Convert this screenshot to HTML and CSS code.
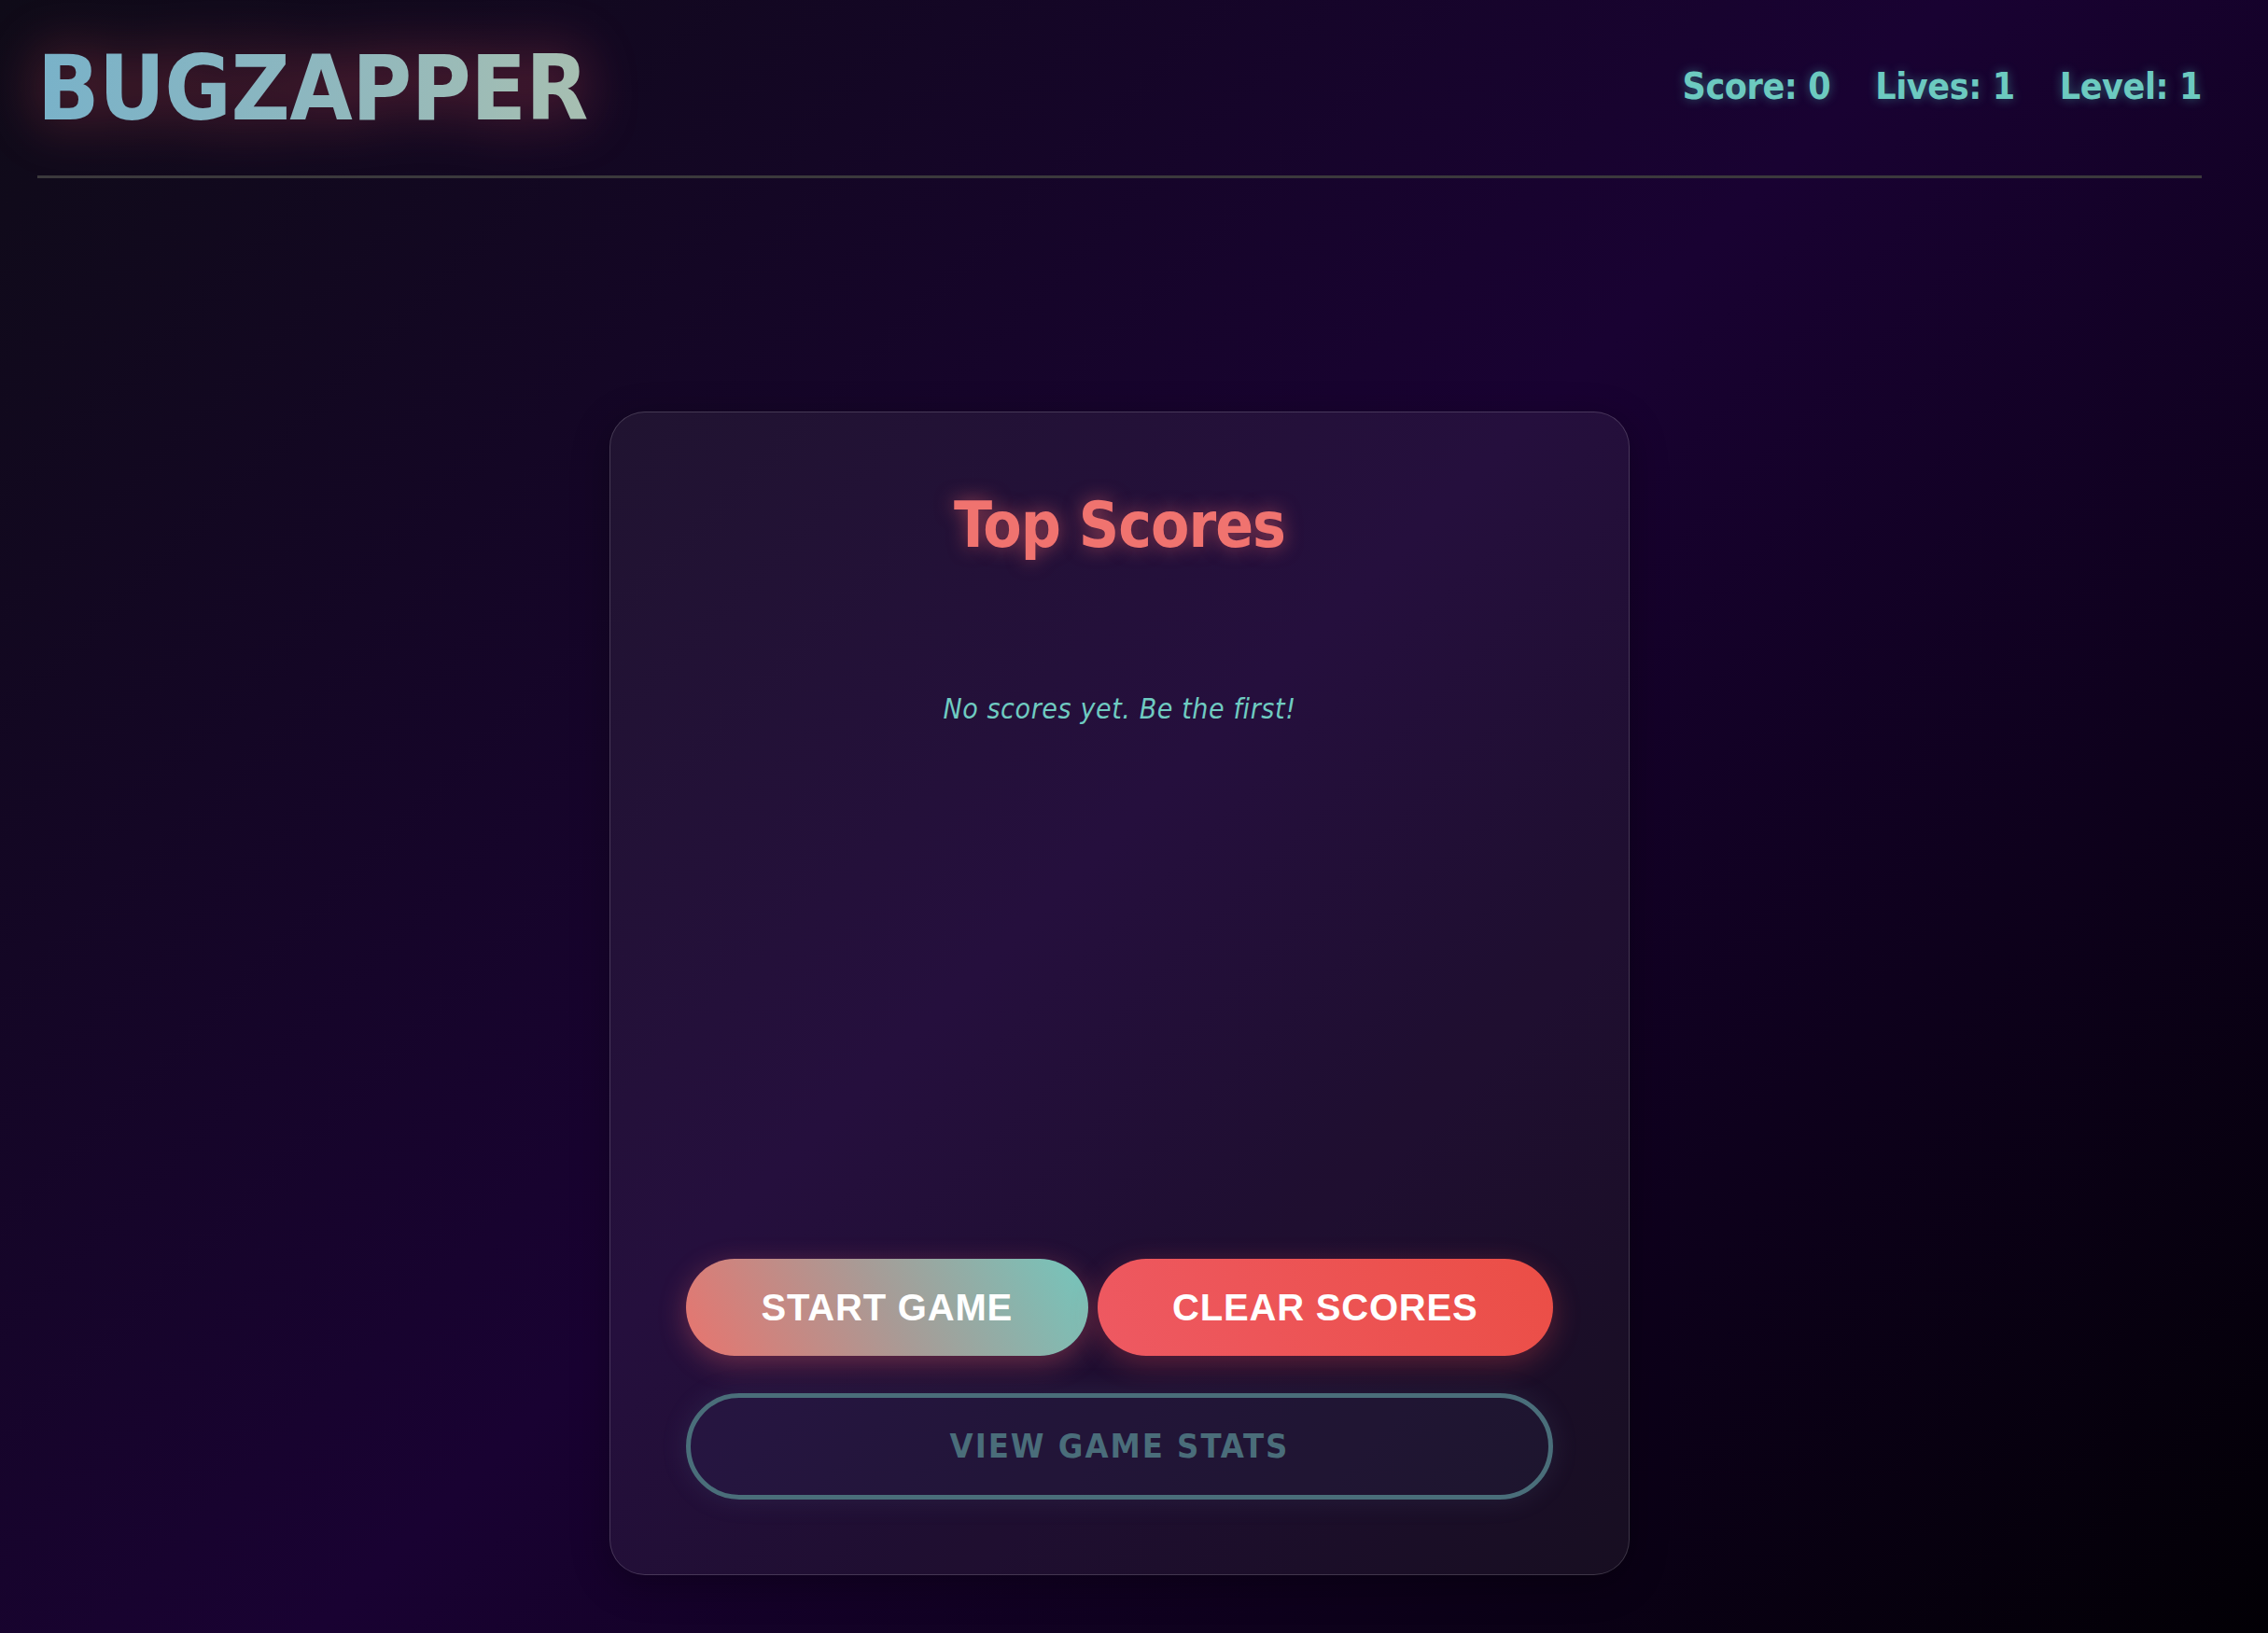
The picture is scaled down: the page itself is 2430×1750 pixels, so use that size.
FILE: index.html
```html
<!DOCTYPE html>
<html lang="en">
<head>
<meta charset="utf-8">
<title>BugZapper</title>
<link rel="stylesheet" href="styles.css">
</head>
<body>
<div class="page">
  <header class="header">
    <h1 class="logo">BUGZAPPER</h1>
    <div class="stats">
      <span class="stat">Score: 0</span>
      <span class="stat">Lives: 1</span>
      <span class="stat">Level: 1</span>
    </div>
  </header>
  <main class="main">
    <section class="card">
      <h2 class="card-title">Top Scores</h2>
      <div class="scores">
        <p class="empty">No scores yet. Be the first!</p>
      </div>
      <div class="btn-row">
        <button class="btn btn-start">START GAME</button>
        <button class="btn btn-clear">CLEAR SCORES</button>
      </div>
      <button class="btn-stats">VIEW GAME STATS</button>
    </section>
  </main>
</div>
</body>
</html>
```

FILE: styles.css
```css
html, body {
  margin: 0;
  padding: 0;
}
body {
  width: 2430px;
  height: 1750px;
  overflow: hidden;
  background: linear-gradient(135deg, #0f0b18 0%, #190232 50%, #020005 100%);
  font-family: "DejaVu Sans Condensed", "DejaVu Sans", sans-serif;
  font-stretch: condensed;
}
.page {
  width: 2319px;
  margin-left: 40px;
}
.header {
  display: flex;
  justify-content: space-between;
  align-items: center;
  padding: 46px 0 45px;
  border-bottom: 3px solid #3b393c;
}
.logo {
  margin: 0;
  font-size: 97px;
  line-height: 1;
  font-weight: bold;
  letter-spacing: -0.5px;
  background: linear-gradient(90deg, #79b2c9 0%, #8db7bf 50%, #a7bfb1 100%);
  -webkit-background-clip: text;
  background-clip: text;
  color: transparent;
  filter: drop-shadow(0 0 30px rgba(255, 90, 100, 0.4));
}
.stats {
  display: flex;
  gap: 48px;
  margin-bottom: 5px;
}
.stat {
  font-size: 39px;
  line-height: 1;
  font-weight: bold;
  letter-spacing: -0.4px;
  color: #6ccac0;
  text-shadow: 0 0 12px rgba(78, 205, 196, 0.45);
}
.main {
  display: flex;
  justify-content: center;
  padding-top: 250px;
}
.card {
  width: 1093px;
  box-sizing: border-box;
  padding: 88px 81px 80px;
  border: 1px solid rgba(255, 255, 255, 0.17);
  border-radius: 38px;
  background: rgba(255, 255, 255, 0.055);
  box-shadow: 0 10px 40px rgba(0, 0, 0, 0.3);
  display: flex;
  flex-direction: column;
}
.card-title {
  margin: 0;
  text-align: center;
  font-size: 67px;
  line-height: 1;
  font-weight: bold;
  letter-spacing: -1px;
  color: #f0736f;
  text-shadow: 0 0 20px rgba(255, 107, 107, 0.5);
}
.scores {
  height: 752px;
  box-sizing: border-box;
  padding-top: 148px;
}
.empty {
  margin: 0;
  text-align: center;
  font-size: 30px;
  line-height: 1;
  font-style: italic;
  letter-spacing: 0.6px;
  color: #6fcbc1;
}
.btn-row {
  display: flex;
  gap: 10px;
}
.btn {
  flex: 1 1 auto;
  border: none;
  border-radius: 60px;
  padding: 32px 60px;
  font-family: "Liberation Sans", Arial, sans-serif;
  font-stretch: normal;
  font-size: 40px;
  line-height: 1;
  font-weight: bold;
  letter-spacing: 0.8px;
  color: #ffffff;
}
.btn-start {
  background: linear-gradient(60deg, #e8746e 0%, #a89b96 50%, #74c6bc 100%);
  box-shadow: 0 8px 30px rgba(255, 107, 107, 0.32);
}
.btn-clear {
  background: linear-gradient(60deg, #ee5962 0%, #eb4e46 100%);
  box-shadow: 0 8px 30px rgba(255, 80, 80, 0.28);
}
.btn-stats {
  margin-top: 40px;
  border: 5px solid #4a6e7a;
  border-radius: 60px;
  padding: 32px 20px;
  background: rgba(90, 120, 170, 0.07);
  box-shadow: 0 0 30px rgba(120, 160, 200, 0.12);
  font-family: "DejaVu Sans Condensed", "DejaVu Sans", sans-serif;
  font-stretch: condensed;
  font-size: 36px;
  line-height: 40px;
  font-weight: bold;
  letter-spacing: 2px;
  color: #4a6d7a;
}
```
